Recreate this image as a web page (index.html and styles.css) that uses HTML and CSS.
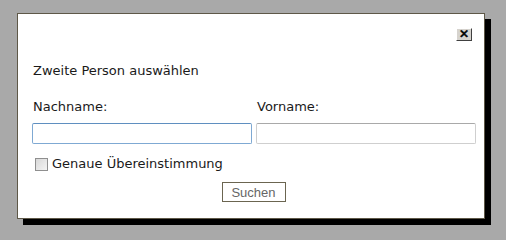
FILE: index.html
```html
<!DOCTYPE html>
<html lang="de">
<head>
<meta charset="utf-8">
<link rel="stylesheet" href="styles.css">
</head>
<body>
<div class="dialog">
  <div class="topbar"><button class="close" type="button">✕</button></div>
  <div class="title">Zweite Person auswählen</div>
  <div class="fields">
    <label class="lbl">Nachname:</label>
    <label class="lbl">Vorname:</label>
    <input class="inp focus" type="text">
    <input class="inp" type="text">
  </div>
  <label class="check"><span class="box"></span>Genaue Übereinstimmung</label>
  <div class="actions"><button class="search" type="button">Suchen</button></div>
</div>
</body>
</html>
```
FILE: styles.css
```css
html, body { margin: 0; padding: 0; }
body {
  background: #a9a9a9;
  width: 506px;
  height: 237px;
  overflow: hidden;
  font-family: "DejaVu Sans", Verdana, sans-serif;
  font-size: 13px;
  color: #1a1a1a;
}
.dialog {
  box-sizing: border-box;
  margin: 13px 0 0 17px;
  width: 468px;
  height: 206px;
  background: #fff;
  border: 1px solid #5e5848;
  box-shadow: 6px 6px 0 #000;
  padding: 14px 8px 0 14px;
}
.topbar { display: flex; justify-content: flex-end; padding-right: 4px; height: 13px; }
.close {
  box-sizing: border-box;
  width: 16px; height: 13px;
  padding: 0; margin: 0;
  background: #d6d3ce;
  border: 1px solid;
  border-color: #fff #404040 #404040 #fff;
  font: bold 12px/11px "DejaVu Sans", sans-serif;
  color: #000;
  -webkit-text-stroke: 0.6px #000;
}
.title { margin-top: 22px; padding-left: 1px; line-height: 16px; }
.fields {
  display: grid;
  grid-template-columns: 220px 220px;
  column-gap: 4px;
  margin-top: 20px;
}
.lbl { padding-left: 1px; line-height: 16px; height: 16px; margin-bottom: 8px; }
.inp {
  box-sizing: border-box;
  width: 220px; height: 21px;
  margin: 0;
  border: 1px solid #cfcfcf;
  border-top-color: #a9a9a9;
  border-radius: 2px;
  background: #fff;
  outline: none;
}
.inp.focus { border-color: #7fa9d3; border-top-color: #5f8fc0; }
.check { display: flex; align-items: center; margin-top: 13px; margin-left: 3px; height: 14px; line-height: 14px; }
.box {
  box-sizing: border-box;
  width: 13px; height: 13px;
  border: 1px solid #8f8f8f;
  background: linear-gradient(135deg, #d8d8d8, #f4f4f4);
  margin-right: 4px;
}
.actions { display: flex; justify-content: center; margin-top: 11px; padding-right: 4px; }
.search {
  box-sizing: border-box;
  width: 64px; height: 20px;
  margin: 0 0 0 3px; padding: 0;
  background: #fff;
  border: 1px solid #6b6550;
  font: 13px "Liberation Sans", Arial, sans-serif;
  color: #666;
}
```
